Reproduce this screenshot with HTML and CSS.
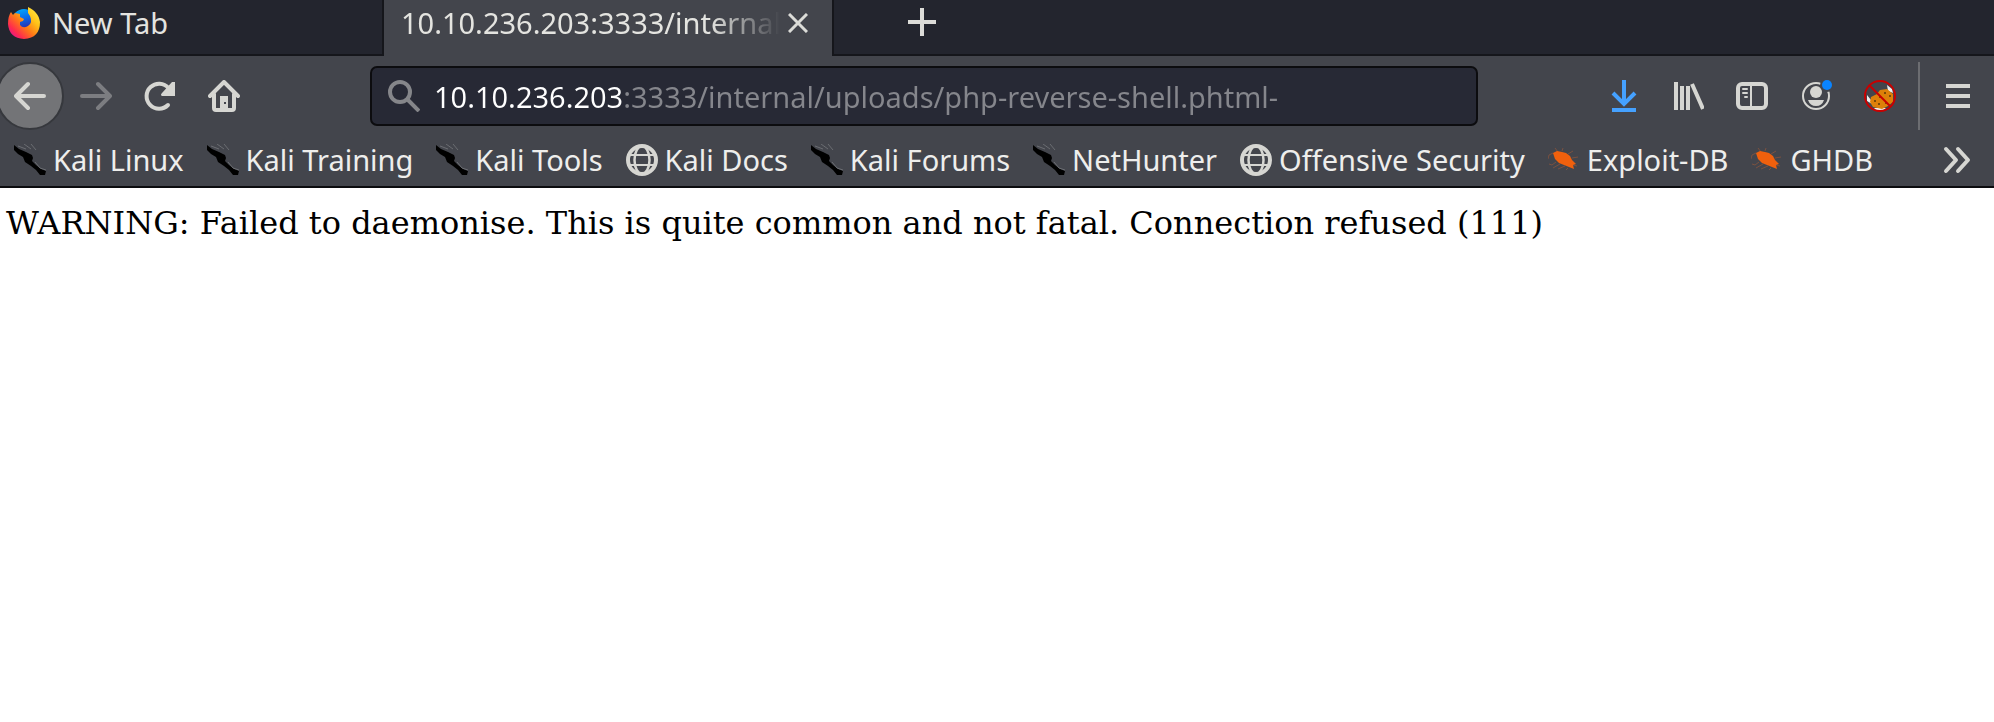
FILE: index.html
```html
<!DOCTYPE html>
<html lang="en">
<head>
<meta charset="utf-8">
<title>10.10.236.203:3333/internal/uploads/php-reverse-shell.phtml-</title>
<link rel="stylesheet" href="styles.css">
</head>
<body>
<svg class="defs" aria-hidden="true">
  <symbol id="kali" viewBox="0 0 32 32">
    <path d="M4 2 12 5 M10 0l7 5 M17 0l5 6" fill="none" stroke="#6b6d72" stroke-width="1"/>
    <path d="M0 1 5 5 12 8 18 11 19 14 18 17 22 21 27 25 32 27 31 31 26 31 22 26 17 22 11 18 9 13 4 10 0 6Z" fill="#000"/>
    <path d="M21 18l5 6 6 2" fill="none" stroke="#6b6d72"/>
  </symbol>
  <symbol id="globe" viewBox="0 0 32 32">
    <g fill="none" stroke="#d6d6d2"><circle cx="16" cy="16" r="14" stroke-width="4"/><ellipse cx="16" cy="16" rx="7.5" ry="14" stroke-width="2.5"/><path d="M3 11h26M3 21h26" stroke-width="2"/></g>
  </symbol>
  <symbol id="bug" viewBox="0 0 32 32">
    <path d="M5 9 1 11 0 15 M10 8 7 4 M14 7l1-3 M20 10l5-3 M24 14l6-1 M25 21l4 1 M8 18l-4 3 -3-1 M12 20l-7 4 M17 22l-7 3 M20 24l-2 2" fill="none" stroke="#7a5140" stroke-width="1"/>
    <path d="M5 9 9 7 14 8 18 9 22 12 24 16 28 20 25 21 26 25 21 23 16 21 11 19 7 15 6 12Z" fill="#f0600d"/>
  </symbol>
</svg>
<header class="chrome">
  <div class="tabs" role="tablist">
    <button class="tab" role="tab" aria-selected="false">
      <svg class="icon" viewBox="0 0 32 32" aria-hidden="true">
        <defs>
          <linearGradient id="flame" x1="1" y1="0" x2="0.1" y2="0.9"><stop offset="0" stop-color="#fff44f"/><stop offset=".35" stop-color="#ffc218"/><stop offset=".6" stop-color="#ff7a16"/><stop offset=".85" stop-color="#ff2b4e"/><stop offset="1" stop-color="#e5168b"/></linearGradient>
          <linearGradient id="orb" x1="0" y1="0" x2=".3" y2="1"><stop offset="0" stop-color="#00b5ff"/><stop offset=".5" stop-color="#0a68e8"/><stop offset="1" stop-color="#3a1e95"/></linearGradient>
        </defs>
        <circle cx="16" cy="14" r="12" fill="url(#orb)"/>
        <path d="M3 5 5 8 7 6 12 7 12 10 16 12 15 14 12 15 12 18Q15 22 20 19 25 16 22 9L20 6 20 0Q26 3 28 6 31 9 32 15 32 31 16 32 1 31 0 17 0 9 3 5Z" fill="url(#flame)"/>
      </svg>
      <span class="tab-title">New Tab</span>
    </button>
    <div class="tab selected" role="tab" aria-selected="true">
      <span class="tab-title fade">10.10.236.203:3333/internal/</span>
      <button class="close" aria-label="Close tab"><svg viewBox="0 0 20 20"><path d="M1 1 19 19M19 1 1 19"/></svg></button>
    </div>
    <button class="new-tab" aria-label="Open a new tab"><svg viewBox="0 0 28 28"><path d="M14 0v28M0 14h28"/></svg></button>
  </div>
  <nav class="toolbar" aria-label="Navigation">
    <div class="group left">
      <button class="tool back" aria-label="Back"><svg class="icon" viewBox="0 0 32 32"><path class="line" d="M30 16H3M14 4 2 16 14 28"/></svg></button>
      <button class="tool forward" aria-label="Forward" disabled><svg class="icon" viewBox="0 0 32 32"><path class="line" d="M2 16H29M18 4 30 16 18 28"/></svg></button>
      <button class="tool" aria-label="Reload"><svg class="icon" viewBox="0 0 32 32"><path class="line" d="M24 25A12.500 12.500 0 1 1 24.500 8"/><path class="fill" d="M31 2V16H18Q16 15 18 13L28 2Z"/></svg></button>
      <button class="tool" aria-label="Home"><svg class="icon" viewBox="0 0 32 32"><path class="line" d="M2 16 16 2 30 16M6 14V28Q6 30 8 30H24Q26 30 26 28V14"/><path class="fill" d="M12 16h8v14h-8z"/><path d="M16 22h2v2h-2z" fill="#43454c"/></svg></button>
    </div>
    <div class="urlbar">
      <svg class="icon" viewBox="0 0 32 32" aria-hidden="true"><circle cx="12" cy="12" r="10"/><path d="M19 19 31 31"/></svg>
      <input type="text" aria-label="Address" value="10.10.236.203:3333/internal/uploads/php-reverse-shell.phtml-">
    </div>
    <div class="group right">
      <button class="tool download" aria-label="Downloads"><svg class="icon square" viewBox="0 0 32 32"><path class="line" d="M16 0V23M5 13 16 24 27 13M4 30H28"/></svg></button>
      <button class="tool" aria-label="Library"><svg class="icon square" viewBox="0 0 32 32"><path class="line" d="M4 2V30M10 6V30M16 6V30M20 4 31 29"/></svg></button>
      <button class="tool" aria-label="Sidebars"><svg class="icon" viewBox="0 0 32 32"><rect class="line" x="2" y="4" width="28" height="24" rx="4"/><path class="line thin" d="M15 4V28M7 9H11M7 13H11M9 17H11"/></svg></button>
      <button class="tool" aria-label="Account"><svg class="icon" viewBox="0 0 32 32"><circle class="line thin" cx="16" cy="16" r="13"/><circle class="fill" cx="16" cy="12" r="6"/><path class="fill" d="M8 20H24Q22 26 16 26T8 20Z"/><circle cx="27" cy="5" r="7" fill="#43454c"/><circle cx="27" cy="5" r="5" fill="#0a84ff"/></svg></button>
      <button class="tool" aria-label="Cookie blocker"><svg class="icon" viewBox="0 0 32 32"><path d="M3 15 7 20 8 24 3 21ZM23 5 28 9 29 13 24 11ZM10 28 22 28 18 31 13 31Z" fill="#eee"/><path d="M7 17 13 14 16 10 23 9 29 14 29 22 24 26 18 29 9 27 6 22Z" fill="#dd8009"/><path d="M10 21h2M14 24h2M20 13h2M25 16h2M21 23h2M15 17h2" stroke="#7b4a08" stroke-width="2"/><circle cx="16" cy="16" r="15" fill="none" stroke="#c80000" stroke-width="2"/><path d="M5 5 27 27" stroke="#c80000" stroke-width="2"/></svg></button>
      <span class="separator"></span>
      <button class="tool menu" aria-label="Menu"><svg class="icon square" viewBox="0 0 32 32"><path class="line" d="M4 6H28M4 16H28M4 26H28"/></svg></button>
    </div>
  </nav>
  <nav class="bookmarks" aria-label="Bookmarks">
    <a href="#"><svg class="icon"><use href="#kali"/></svg>Kali Linux</a>
    <a href="#"><svg class="icon"><use href="#kali"/></svg>Kali Training</a>
    <a href="#"><svg class="icon"><use href="#kali"/></svg>Kali Tools</a>
    <a href="#"><svg class="icon"><use href="#globe"/></svg>Kali Docs</a>
    <a href="#"><svg class="icon"><use href="#kali"/></svg>Kali Forums</a>
    <a href="#"><svg class="icon"><use href="#kali"/></svg>NetHunter</a>
    <a href="#"><svg class="icon"><use href="#globe"/></svg>Offensive Security</a>
    <a href="#"><svg class="icon"><use href="#bug"/></svg>Exploit-DB</a>
    <a href="#"><svg class="icon"><use href="#bug"/></svg>GHDB</a>
    <button class="more" aria-label="Show more bookmarks"><svg class="icon" viewBox="0 0 32 32"><path class="line" d="M4 5 14 16 4 27M16 5 26 16 16 27"/></svg></button>
  </nav>
</header>
<main class="page">WARNING: Failed to daemonise. This is quite common and not fatal. Connection refused (111)</main>
</body>
</html>
```

FILE: styles.css
```css
* { box-sizing: border-box; }

body {
  margin: 0;
  background: #fff;
}

button {
  padding: 0;
  border: 0;
  background: none;
  font: inherit;
  color: inherit;
}

.defs {
  display: none;
}

.chrome {
  background: #43454c;
  border-bottom: 2px solid #0c0c0f;
  color: #e4e4e0;
  font: 29px/40px "Noto Sans", sans-serif;
}

.icon {
  flex: none;
  width: 32px;
  height: 32px;
}

.line {
  fill: none;
  stroke: currentColor;
  stroke-width: 4;
  stroke-linecap: round;
  stroke-linejoin: round;
}

.square .line {
  stroke-linecap: butt;
  stroke-linejoin: miter;
}

.line.thin { stroke-width: 2; }
.fill { fill: currentColor; }

.tabs {
  display: flex;
  height: 56px;
  background: linear-gradient(#15161b, #15161b) bottom / 100% 2px no-repeat #23252e;
}

.tab {
  display: flex;
  align-items: center;
  gap: 12px;
  width: 384px;
  padding: 0 8px 10px;
  border-right: 2px solid #15161b;
  text-align: left;
}

.selected {
  width: 450px;
  gap: 8px;
  padding: 0 24px 10px 17px;
  background: #43454c;
}

.tab-title {
  flex: 1;
  overflow: hidden;
  white-space: nowrap;
}

.fade {
  mask-image: linear-gradient(to left, transparent, #000 70px);
}

.close svg,
.new-tab svg {
  display: block;
  width: 20px;
  height: 20px;
  fill: none;
  stroke: #dcdcd8;
  stroke-width: 3;
}

.new-tab {
  padding: 0 74px 12px;
}

.new-tab svg {
  width: 28px;
  height: 28px;
  stroke-width: 4;
}

.toolbar {
  display: flex;
  align-items: center;
  height: 80px;
  color: #d6d6d2;
}

.group {
  display: flex;
  align-items: center;
}

.left {
  flex: 0 0 370px;
}

.right {
  flex: 1;
  justify-content: flex-end;
}

.tool {
  display: grid;
  place-items: center;
  width: 64px;
  height: 64px;
}

.back {
  width: 68px;
  height: 68px;
  margin-left: -4px;
  border: 2px solid #36383d;
  border-radius: 50%;
  background: #737477;
}

.forward { color: #7c7d81; }
.download { color: #45a1ff; }

.separator {
  width: 2px;
  height: 68px;
  margin: 0 6px;
  background: #6c6d71;
}

.menu {
  margin-right: 4px;
}

.urlbar {
  display: flex;
  align-items: center;
  gap: 14px;
  flex: 0 1 1108px;
  height: 60px;
  padding: 0 16px;
  border: 2px solid #0c0c0f;
  border-radius: 7px;
  background: #272935;
}

.urlbar .icon {
  fill: none;
  stroke: #85868a;
  stroke-width: 4;
}

.urlbar input {
  flex: 1;
  min-width: 0;
  padding: 2px 0 0;
  border: 0;
  outline: 0;
  /* Host is bright, the rest of the address is dimmed. */
  background: linear-gradient(to right, #fff 189px, #85868c 189px);
  background-clip: text;
  color: transparent;
  font: inherit;
}

.bookmarks {
  display: flex;
  align-items: center;
  gap: 23px;
  height: 50px;
  padding: 0 20px 2px 14px;
}

.bookmarks a {
  display: flex;
  align-items: center;
  gap: 7px;
  color: #eeeeec;
  text-decoration: none;
  white-space: nowrap;
}

.more {
  display: flex;
  margin-left: auto;
  color: #d6d6d2;
}

.page {
  padding: 16px 6px;
  color: #000;
  font: 32px/38px "DejaVu Serif", serif;
}
```
